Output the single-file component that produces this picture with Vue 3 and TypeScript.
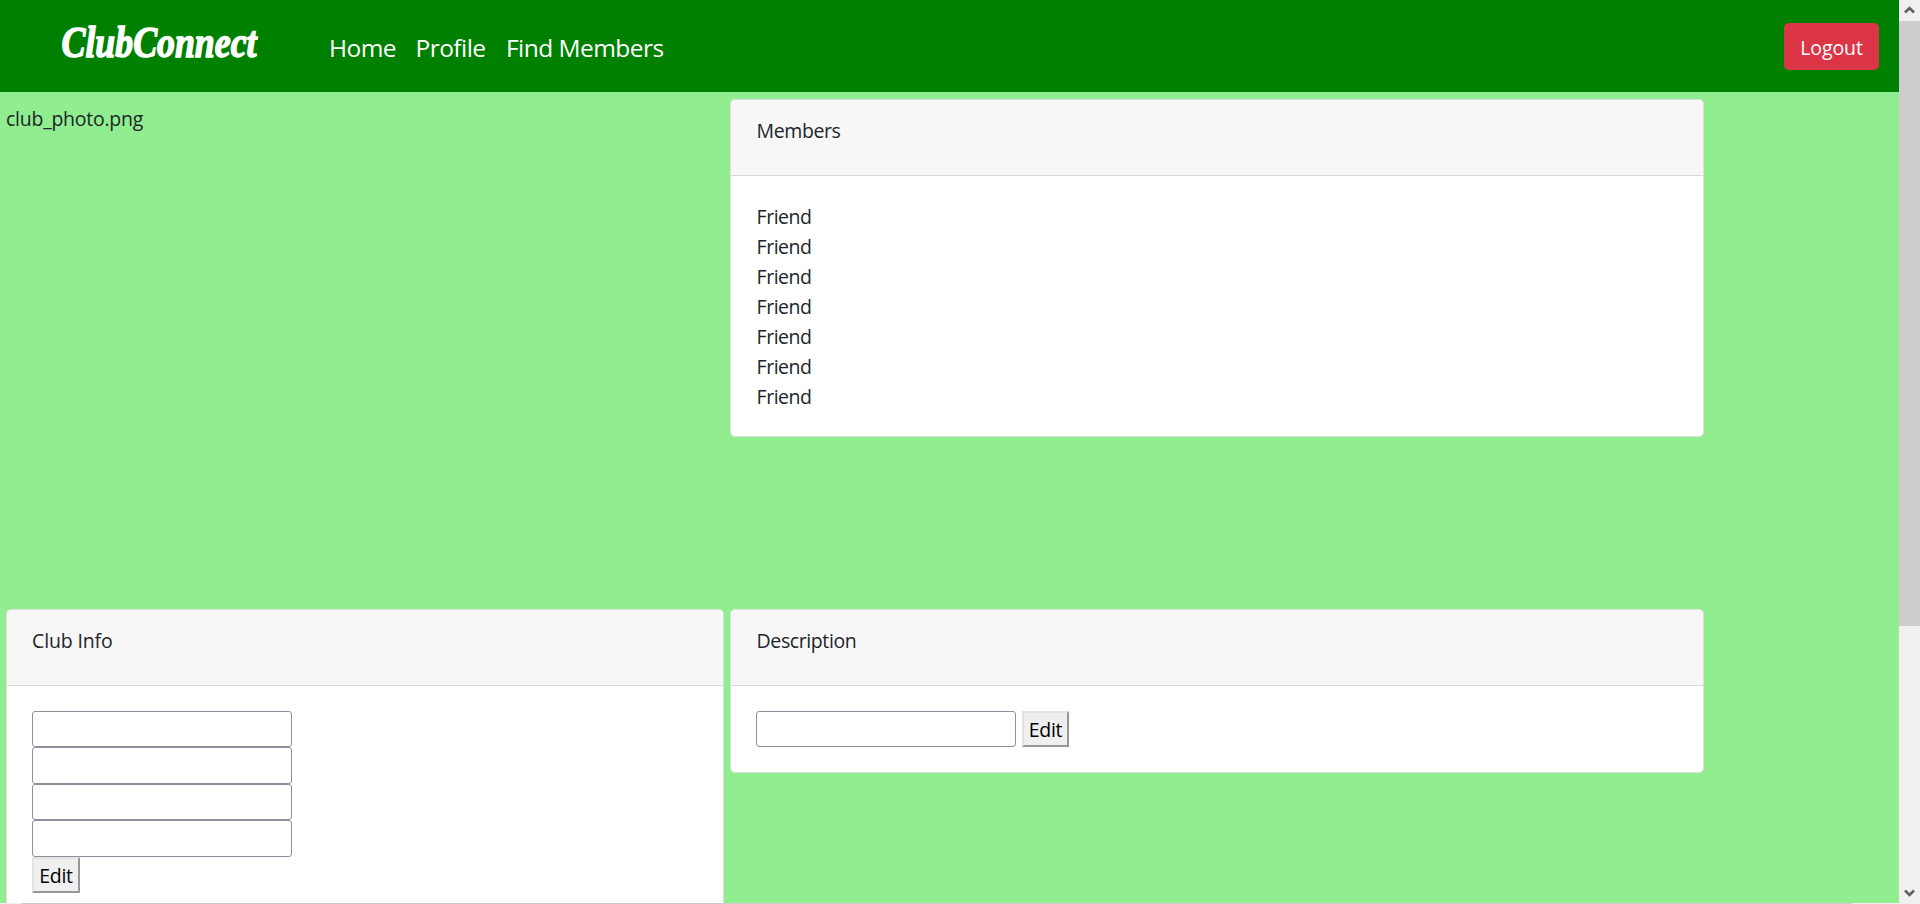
<script setup lang="ts">
import { ref } from 'vue'

const links: { label: string; key: string }[] = [
  { label: 'Home', key: 'home' },
  { label: 'Profile', key: 'profile' },
  { label: 'Find Members', key: 'find' },
]
const members: string[] = Array.from({ length: 7 }, () => 'Friend')
const info = ref<string[]>(['', '', '', ''])
const description = ref('')
</script>

<template>
  <div class="window">
    <div class="page">
      <header class="navbar">
        <svg class="brand" width="264" height="70" role="img" aria-label="ClubConnect">
          <text x="0.5" y="49.5" textLength="195" lengthAdjust="spacingAndGlyphs">ClubConnect</text>
        </svg>
        <nav class="links">
          <a v-for="link in links" :key="link.key" :class="link.key">{{ link.label }}</a>
        </nav>
        <button class="logout"><span>Logout</span></button>
      </header>
      <main class="grid">
        <div class="photo">club_photo.png</div>
        <section class="card">
          <div class="card-header">Members</div>
          <div class="card-body">
            <div v-for="(name, i) in members" :key="i" class="friend">{{ name }}</div>
          </div>
        </section>
        <section class="card tall">
          <div class="card-header info">Club Info</div>
          <div class="card-body stack">
            <input v-for="(_, i) in info" :key="i" v-model="info[i]" type="text" />
            <button class="edit">Edit</button>
          </div>
        </section>
        <section class="card">
          <div class="card-header">Description</div>
          <div class="card-body inline">
            <input v-model="description" type="text" />
            <button class="edit narrow">Edit</button>
          </div>
        </section>
      </main>
      <div class="hscroll"><div class="hthumb"></div></div>
    </div>
    <aside class="vscroll">
      <svg class="arrow" width="21" height="21"><path d="M6 12.5 L10.5 8 L15 12.5" /></svg>
      <div class="vthumb"></div>
      <svg class="arrow down" width="21" height="21"><path d="M6 7.5 L10.5 12 L15 7.5" /></svg>
    </aside>
  </div>
</template>

<style>
html,
body {
  margin: 0;
  overflow: hidden;
}
</style>

<style scoped>
* {
  box-sizing: border-box;
}
.window {
  display: flex;
  width: 1920px;
  height: 904px;
  overflow: hidden;
  font: 19.5px/30px 'Open Sans', 'Noto Sans', sans-serif;
  letter-spacing: -0.4px;
  color: #212529;
}
.page {
  display: flex;
  flex-direction: column;
  width: 1899px;
  height: 904px;
  overflow: hidden;
  background: #90ee90;
}
.navbar {
  display: flex;
  flex: none;
  align-items: center;
  height: 92px;
  padding: 0 20px 0 61px;
  background: #008000;
}
.brand {
  flex: none;
  align-self: flex-start;
  margin-top: 7px;
}
.brand text {
  font: italic bold 45px 'Liberation Serif', serif;
  letter-spacing: 0;
  fill: #fff;
  stroke: #fff;
  stroke-width: 1.5;
}
.links {
  display: flex;
  gap: 20px;
  margin-left: 4px;
  padding-top: 4px;
}
.links a {
  color: #fff;
  font-size: 24.5px;
  line-height: 38px;
  letter-spacing: -0.55px;
  white-space: nowrap;
}
.home {
  width: 66.5px;
}
.profile {
  width: 70.5px;
}
.logout {
  width: 95px;
  height: 47px;
  margin-left: auto;
  padding: 3px 0 0;
  border: 0;
  border-radius: 5px;
  background: #dc3545;
  color: #fff;
  font: inherit;
  letter-spacing: -0.1px;
}
.grid {
  display: grid;
  flex: 1;
  grid-template-columns: 718px 974px;
  grid-template-rows: 504px auto;
  gap: 6px;
  align-items: start;
  min-height: 0;
  padding: 7px 0 0 6px;
}
.photo {
  padding: 5px 0 0;
  letter-spacing: -0.25px;
}
.card {
  overflow: hidden;
  border: 1px solid #dcdfdc;
  border-radius: 5px;
  background: #fff;
}
.tall {
  height: 330px;
}
.card-header {
  height: 76px;
  padding: 16px 25px 14px 25.6px;
  border-bottom: 1px solid #d8d8d8;
  background: #f7f7f7;
}
.info {
  padding-left: 25px;
  letter-spacing: -0.15px;
}
.card-body {
  padding: 25px;
}
.friend {
  height: 30px;
  padding-left: 0.6px;
  line-height: 32px;
  letter-spacing: -0.5px;
}
.stack {
  display: flex;
  flex-direction: column;
  align-items: flex-start;
}
.inline {
  display: flex;
  gap: 6px;
}
input {
  width: 260px;
  height: 36.4px;
  border: 1px solid #8f8f9d;
  border-radius: 3px;
  background: #fff;
  font: inherit;
}
.inline input,
.edit {
  height: 36px;
}
.edit {
  width: 48px;
  padding: 2px 0 0;
  border: 2px solid;
  border-color: #e3e3e3 #979797 #979797 #e3e3e3;
  background: #efefef;
  color: #000;
  font: inherit;
  letter-spacing: -0.3px;
}
.narrow {
  width: 47px;
}
.hscroll {
  flex: none;
  height: 1px;
  padding: 0 47px 0 21px;
  background: #f0f0f0;
}
.hthumb {
  height: 1px;
  background: #cdcdcd;
}
.vscroll {
  display: flex;
  flex-direction: column;
  width: 21px;
  background: #f0f0f0;
}
.vthumb {
  height: 605px;
  background: #cdcdcd;
}
.arrow {
  flex: none;
}
.arrow path {
  fill: none;
  stroke: #606060;
  stroke-width: 2.6;
}
.down {
  margin-top: auto;
}
</style>
